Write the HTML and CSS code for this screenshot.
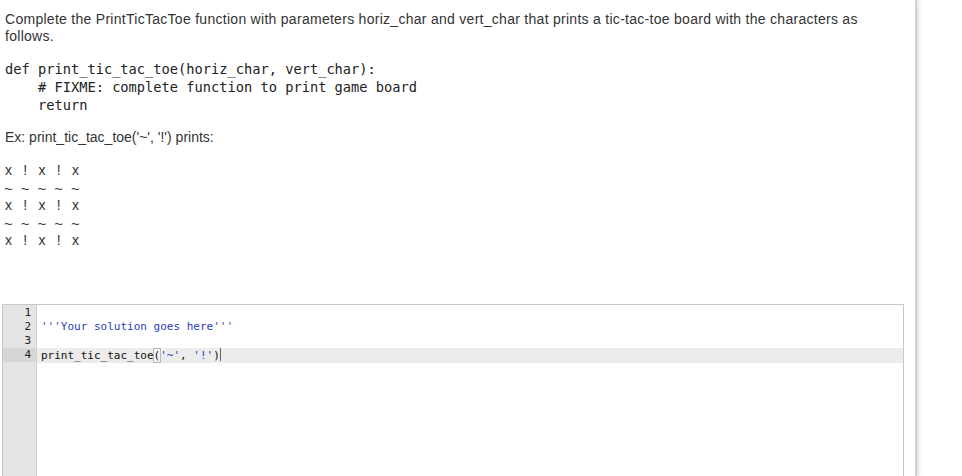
FILE: index.html
```html
<!DOCTYPE html>
<html>
<head>
<meta charset="utf-8">
<link rel="stylesheet" href="styles.css">
</head>
<body>
<div class="page">
  <div class="content">
    <p class="para intro">Complete the PrintTicTacToe function with parameters horiz_char and vert_char that prints a tic-tac-toe board with the characters as follows.</p>
    <pre class="code">def print_tic_tac_toe(horiz_char, vert_char):
    # FIXME: complete function to print game board
    return</pre>
    <p class="para ex">Ex: print_tic_tac_toe('~', '!') prints:</p>
    <div class="board">
      <div class="brow"><span>x</span><span>!</span><span>x</span><span>!</span><span>x</span></div>
      <div class="brow tilde"><span>~</span><span>~</span><span>~</span><span>~</span><span>~</span></div>
      <div class="brow"><span>x</span><span>!</span><span>x</span><span>!</span><span>x</span></div>
      <div class="brow tilde"><span>~</span><span>~</span><span>~</span><span>~</span><span>~</span></div>
      <div class="brow"><span>x</span><span>!</span><span>x</span><span>!</span><span>x</span></div>
    </div>
  </div>
  <div class="editor">
    <div class="gutter">
      <div class="ln">1</div>
      <div class="ln">2</div>
      <div class="ln">3</div>
      <div class="ln active">4</div>
    </div>
    <div class="lines">
      <div class="line">&nbsp;</div>
      <div class="line"><span class="str">'''Your solution goes here'''</span></div>
      <div class="line">&nbsp;</div>
      <div class="line active">print_tic_tac_toe<span class="match">(</span><span class="str">'~'</span>, <span class="str">'!'</span>)<span class="cursor"></span></div>
    </div>
  </div>
</div>
</body>
</html>
```

FILE: styles.css
```css
html, body {
  margin: 0;
  padding: 0;
  background: #fff;
}
body {
  font-family: "Liberation Sans", Arial, sans-serif;
  color: #333;
  overflow: hidden;
  height: 476px;
}
.page {
  width: 917px;
  height: 476px;
  box-sizing: border-box;
  border-right: 2px solid #d2d2d2;
  box-shadow: 2px 0 3px rgba(0, 0, 0, 0.12);
  padding-top: 11px;
  display: flex;
  flex-direction: column;
  overflow: hidden;
}
.content {
  padding: 0 5px;
}
.para {
  margin: 0;
  font-size: 14px;
  line-height: 17px;
  letter-spacing: 0.28px;
}
.intro {
  max-width: 870px;
}
.code {
  margin: 15px 0 0;
  font-family: "DejaVu Sans Mono", monospace;
  font-size: 13.7px;
  line-height: 18px;
  color: #222;
}
.ex {
  margin-top: 15px;
  letter-spacing: 0;
}
.board {
  margin: 16px 0 0 -5px;
  font-size: 14px;
  line-height: 17.6px;
}
.brow {
  display: flex;
}
.brow span {
  width: 16.75px;
  text-align: center;
}
.tilde {
  font-size: 15px;
  line-height: 17.6px;
}
.editor {
  margin: 54px 0 0 2px;
  width: 902px;
  flex: 1;
  box-sizing: border-box;
  border: 1px solid #c8c8c8;
  border-bottom: none;
  display: flex;
  font-family: "DejaVu Sans Mono", monospace;
  font-size: 11px;
  line-height: 14px;
  color: #111;
}
.gutter {
  width: 34px;
  box-sizing: border-box;
  background: #e4e4e4;
  border-right: 1px solid #d0d0d0;
  padding-top: 1px;
  flex: none;
}
.ln {
  text-align: right;
  padding-right: 5px;
  color: #222;
}
.ln.active {
  background: #d6d6d6;
}
.lines {
  flex: 1;
  padding-top: 1px;
}
.line {
  padding-left: 4px;
  white-space: pre;
}
.line.active {
  background: #ececec;
}
.str {
  color: #2a3cbd;
}
.match {
  outline: 1px solid #b8b8b8;
  background: #f4f4f4;
}
.cursor {
  display: inline-block;
  width: 1px;
  height: 13px;
  background: #666;
  vertical-align: -2px;
}
```
